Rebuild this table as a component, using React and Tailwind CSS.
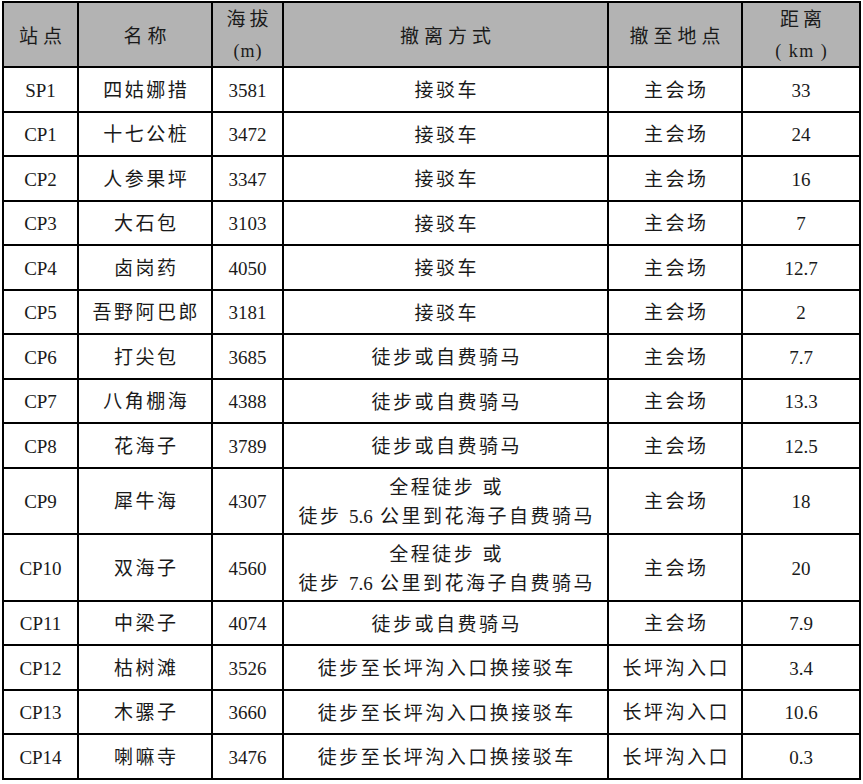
const rows = [
  ['SP1', '四姑娜措', '3581', ['接驳车'], '主会场', '33'],
  ['CP1', '十七公桩', '3472', ['接驳车'], '主会场', '24'],
  ['CP2', '人参果坪', '3347', ['接驳车'], '主会场', '16'],
  ['CP3', '大石包', '3103', ['接驳车'], '主会场', '7'],
  ['CP4', '卤岗药', '4050', ['接驳车'], '主会场', '12.7'],
  ['CP5', '吾野阿巴郎', '3181', ['接驳车'], '主会场', '2'],
  ['CP6', '打尖包', '3685', ['徒步或自费骑马'], '主会场', '7.7'],
  ['CP7', '八角棚海', '4388', ['徒步或自费骑马'], '主会场', '13.3'],
  ['CP8', '花海子', '3789', ['徒步或自费骑马'], '主会场', '12.5'],
  ['CP9', '犀牛海', '4307', ['全程徒步 或', ['徒步 ', '5.6', ' 公里到花海子自费骑马']], '主会场', '18'],
  ['CP10', '双海子', '4560', ['全程徒步 或', ['徒步 ', '7.6', ' 公里到花海子自费骑马']], '主会场', '20'],
  ['CP11', '中梁子', '4074', ['徒步或自费骑马'], '主会场', '7.9'],
  ['CP12', '枯树滩', '3526', ['徒步至长坪沟入口换接驳车'], '长坪沟入口', '3.4'],
  ['CP13', '木骡子', '3660', ['徒步至长坪沟入口换接驳车'], '长坪沟入口', '10.6'],
  ['CP14', '喇嘛寺', '3476', ['徒步至长坪沟入口换接驳车'], '长坪沟入口', '0.3'],
];

const cell = 'border-2 border-black text-center align-middle p-0 pt-[3px]';
const cn = 'text-[19px] tracking-[2.5px] pl-[2.5px]';
const num = 'text-[19px]';
const head = 'border-2 border-black text-center align-middle p-0 font-normal text-[19px]';

export default function App() {
  return (
    <div className="bg-white w-[863px] h-[784px] pt-px pl-[2px] text-[#1a1a1a]" style={{ fontFamily: '"Liberation Serif", "Noto Sans CJK SC", serif' }}>
      <table className="table-fixed border-collapse w-[857px]">
        <colgroup>
          <col className="w-[75px]" />
          <col className="w-[134px]" />
          <col className="w-[71px]" />
          <col className="w-[325px]" />
          <col className="w-[134px]" />
          <col className="w-[118px]" />
        </colgroup>
        <thead>
          <tr className="h-[65px] bg-[#b3b3b3]">
            <th className={`${head} pt-[6px] tracking-[5px] pl-[5px]`}>站点</th>
            <th className={`${head} pt-[6px] tracking-[5px] pl-[5px]`}>名称</th>
            <th className={`${head} pt-[2px] leading-[28px]`}>
              <div className="tracking-[4px] pl-[4px]">海拔</div>
              <div className="mt-[3px] text-[18px] tracking-[1px] pl-px">(m)</div>
            </th>
            <th className={`${head} pt-[6px] tracking-[5px] pl-[5px]`}>撤离方式</th>
            <th className={`${head} pt-[6px] tracking-[5px] pl-[5px]`}>撤至地点</th>
            <th className={`${head} pt-[2px] leading-[28px]`}>
              <div className="tracking-[4px] pl-[4px]">距离</div>
              <div className="mt-[3px] text-[18px] tracking-[1.5px] pl-[1.5px]">( km )</div>
            </th>
          </tr>
        </thead>
        <tbody>
          {rows.map((r) => (
            <tr key={r[0]} className={r[3].length > 1 ? 'h-[66.5px]' : 'h-[44.5px]'}>
              <td className={`${cell} ${num}`}>{r[0]}</td>
              <td className={`${cell} ${cn}`}>{r[1]}</td>
              <td className={`${cell} ${num}`}>{r[2]}</td>
              <td className={`${cell} ${cn} leading-[29px]`}>
                {r[3].map((l, i) =>
                  Array.isArray(l) ? (
                    <div key={i} className="whitespace-pre">
                      {l[0]}
                      <span className="tracking-normal">{l[1]}</span>
                      {l[2]}
                    </div>
                  ) : (
                    <div key={i} className="whitespace-pre">{l}</div>
                  )
                )}
              </td>
              <td className={`${cell} ${cn}`}>{r[4]}</td>
              <td className={`${cell} ${num}`}>{r[5]}</td>
            </tr>
          ))}
        </tbody>
      </table>
    </div>
  );
}
